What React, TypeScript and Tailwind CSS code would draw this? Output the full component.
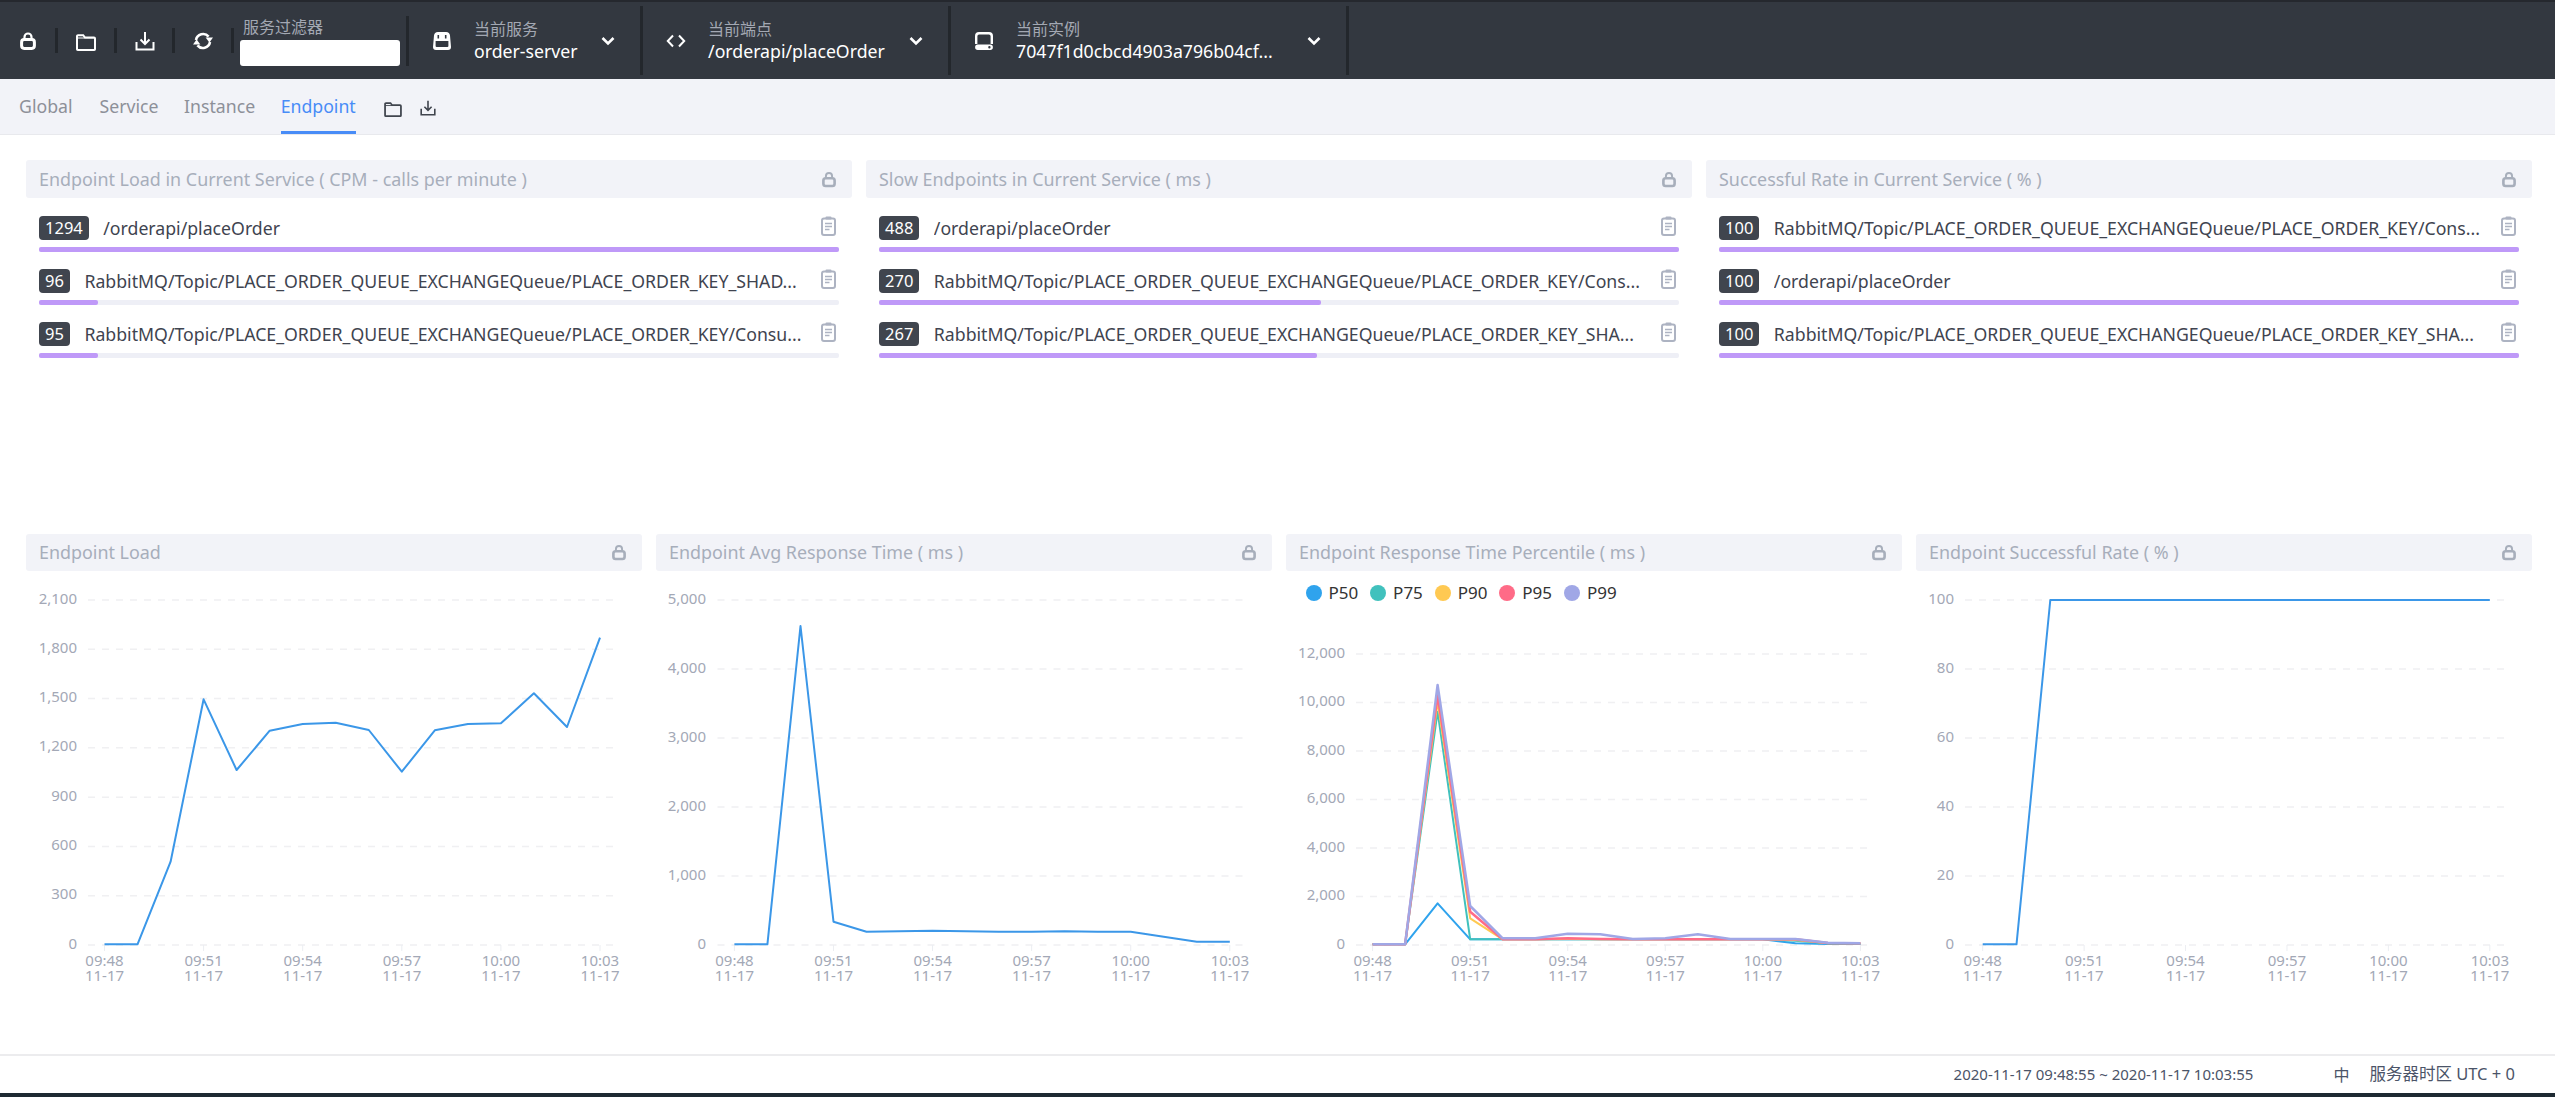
import React from "react";

const tickLabels = ["09:48", "09:51", "09:54", "09:57", "10:00", "10:03"];

const LockIcon = ({ className }: { className?: string }) => (
  <svg viewBox="0 0 16 18" className={className} fill="none" stroke="currentColor">
    <path d="M4.5 8V5a3.5 3.5 0 0 1 7 0v3" strokeWidth="2.2" />
    <rect x="1.6" y="7.6" width="12.8" height="8.8" rx="2.6" strokeWidth="3" />
  </svg>
);

const FolderIcon = ({ className }: { className?: string }) => (
  <svg viewBox="0 0 20 17" className={className} fill="none" stroke="currentColor" strokeWidth="2">
    <path d="M1 15.2V2.2a1 1 0 0 1 1-1h5.2l1.8 2.4h9a1 1 0 0 1 1 1v10.6a.8.8 0 0 1-.8.8H1.8a.8.8 0 0 1-.8-.8z" />
    <path d="M1 4h18" strokeWidth="1" />
  </svg>
);

const DownloadIcon = ({ className }: { className?: string }) => (
  <svg viewBox="0 0 20 20" className={className} fill="none" stroke="currentColor" strokeWidth="2">
    <path d="M10 1v12M5.5 8.5 10 13l4.5-4.5" />
    <path d="M1.5 11v7.5h17V11" />
  </svg>
);

const RefreshIcon = ({ className }: { className?: string }) => (
  <svg viewBox="0 0 20 20" className={className} fill="none" stroke="currentColor" strokeWidth="2.6">
    <path d="M3 9A7.2 7.2 0 0 1 15.6 5.6" />
    <path d="M17 11A7.2 7.2 0 0 1 4.4 14.4" />
    <path d="M12.6 6.6h7.4l-3.6 5z" fill="currentColor" strokeWidth="0" />
    <path d="M0 13.4h7.4l-3.8-5z" fill="currentColor" strokeWidth="0" />
  </svg>
);

const ServiceIcon = ({ className }: { className?: string }) => (
  <svg viewBox="0 0 18 18" className={className} fill="currentColor">
    <path fillRule="evenodd" d="M5 0h8a4 4 0 0 1 4 3.5L18 15a3 3 0 0 1-3 3H3a3 3 0 0 1-3-3L1 3.5A4 4 0 0 1 5 0zM4.5 3v3.5h1.6V3zm7.4 0v3.5h1.6V3zM2.6 9V14a1 1 0 0 0 1 1h10.8a1 1 0 0 0 1-1V9z" />
  </svg>
);

const CodeIcon = ({ className }: { className?: string }) => (
  <svg viewBox="0 0 20 14" className={className} fill="none" stroke="currentColor" strokeWidth="2">
    <path d="M7 1.5 1.8 7 7 12.5M13 1.5 18.2 7 13 12.5" />
  </svg>
);

const InstanceIcon = ({ className }: { className?: string }) => (
  <svg viewBox="0 0 18 18" className={className} fill="currentColor">
    <path fillRule="evenodd" d="M4 0h10a4 4 0 0 1 4 4v8h-2.4V4.2a1.7 1.7 0 0 0-1.7-1.7H4.1a1.7 1.7 0 0 0-1.7 1.7V12H0V4a4 4 0 0 1 4-4zM2.8 12.6h12.4a2.7 2.7 0 0 1 0 5.4H2.8a2.7 2.7 0 0 1 0-5.4zm11.6 1.5a1.2 1.2 0 1 0 0 2.4 1.2 1.2 0 0 0 0-2.4z" />
  </svg>
);

const ChevronIcon = ({ className }: { className?: string }) => (
  <svg viewBox="0 0 14 10" className={className} fill="none" stroke="currentColor" strokeWidth="2.6">
    <path d="M1.5 2 7 7.5 12.5 2" />
  </svg>
);

const ClipboardIcon = () => (
  <svg viewBox="0 0 15 20" className="h-[20px] w-[15px] shrink-0 text-[#adb3c2]" fill="none" stroke="currentColor">
    <rect x="1" y="2.5" width="13" height="16.5" rx="2" strokeWidth="2" />
    <rect x="4.5" y="0.5" width="6" height="3" rx="1" fill="currentColor" strokeWidth="0" />
    <path d="M4 7.5h7M4 10.5h7M4 13.5h4.5" strokeWidth="1.3" />
  </svg>
);

const PanelHeader = ({ title, height }: { title: string; height: string }) => (
  <div className={`flex items-center justify-between rounded-[3px] bg-[#f2f3f8] pl-[13px] pr-[16px] text-[17.9px] text-[#a7aebb] ${height}`}>
    <span>{title}</span>
    <LockIcon className="h-[17px] w-[14px]" />
  </div>
);

type RowData = { value: string; label: string; pct: number };

const ListCard = ({ title, rows }: { title: string; rows: RowData[] }) => (
  <div>
    <PanelHeader title={title} height="h-[38px]" />
    <div className="flex flex-col gap-[17px] px-[13px] pt-[18px]">
      {rows.map((r) => (
        <div key={r.label + r.value}>
          <div className="flex h-[24px] items-start text-[17.7px] text-[#3f4450]">
            <span className="h-[24px] shrink-0 rounded-[4px] bg-[#40454e] px-[6px] text-[16.5px] leading-[24px] text-white">{r.value}</span>
            <span className="ml-[14.5px] flex-1 truncate leading-[24px]">{r.label}</span>
            <span className="ml-[8px] mr-[3px]"><ClipboardIcon /></span>
          </div>
          <div className="mt-[7px] h-[5px] rounded-[2px] bg-[#eeeff6]">
            <div className="h-full rounded-[2px] bg-[#bf99f8]" style={{ width: `${r.pct}%` }} />
          </div>
        </div>
      ))}
    </div>
  </div>
);

type Series = { color: string; width: number; ys: number[] };

type ChartProps = {
  title: string;
  labelRight: number;
  gridLeft: number;
  gridRight: number;
  firstX: number;
  lastX: number;
  topY: number;
  yLabels: string[];
  series: Series[];
  legend?: boolean;
};

// everything below is in chart-local px: x from the card's left edge, y from the header's bottom
const Chart = ({ title, labelRight, gridLeft, gridRight, firstX, lastX, topY, yLabels, series, legend }: ChartProps) => {
  const bottomY = 374;
  const step = (lastX - firstX) / 15;
  const xs = Array.from({ length: 16 }, (_, i) => firstX + i * step);
  return (
    <div className="relative">
      <PanelHeader title={title} height="h-[37px]" />
      {legend && (
        <div className="absolute left-[19.5px] top-[49px] flex gap-[13.6px] text-[17px] leading-[20px] text-[#333]">
          {[
            ["P50", "bg-[#2fa3ed]"],
            ["P75", "bg-[#41c1bd]"],
            ["P90", "bg-[#ffc952]"],
            ["P95", "bg-[#ff6b87]"],
            ["P99", "bg-[#a0a7e6]"],
          ].map(([name, bg]) => (
            <span key={name} className="flex w-[51px] items-center gap-[7px]">
              <span className={`h-[16px] w-[16px] shrink-0 rounded-full ${bg}`} />
              <span>{name}</span>
            </span>
          ))}
        </div>
      )}
      <svg width={616} height={440} className="block">
        {yLabels.map((lbl, i) => {
          const y = topY + ((bottomY - topY) * i) / (yLabels.length - 1);
          return (
            <g key={lbl}>
              <line x1={gridLeft} x2={gridRight} y1={y} y2={y} stroke="#f0f0f2" strokeWidth={1.5} strokeDasharray="7 7" />
              <text x={labelRight} y={y + 3.5} textAnchor="end" fontSize={15} fill="#a3a8b6">{lbl}</text>
            </g>
          );
        })}
        {tickLabels.map((t, i) => {
          const x = xs[i * 3];
          return (
            <g key={t}>
              <line x1={x} x2={x} y1={bottomY} y2={bottomY + 6} stroke="#eceef2" />
              <text x={x} y={bottomY + 21} textAnchor="middle" fontSize={15} fill="#a3a8b6">{t}</text>
              <text x={x} y={bottomY + 36} textAnchor="middle" fontSize={15} fill="#a3a8b6">11-17</text>
            </g>
          );
        })}
        {series.map((s) => (
          <polyline
            key={s.color}
            fill="none"
            stroke={s.color}
            strokeWidth={s.width}
            strokeLinejoin="round"
            points={s.ys.map((y, i) => `${xs[i].toFixed(1)},${y}`).join(" ")}
          />
        ))}
      </svg>
    </div>
  );
};

// reference y pixels (page) -> chart-local y
const toLocal = (ys: number[]) => ys.map((y) => +(y - 571).toFixed(1));
const zoomY = (zs: number[]) => toLocal(zs.map((z) => 520 + z / 3));

const blue = "#3b97e8";

const App = () => {
  return (
    <div className="flex h-[1097px] w-[2555px] flex-col overflow-hidden bg-white font-['Noto_Sans','Noto_Sans_CJK_SC',sans-serif]">
      {/* top bar */}
      <header className="flex h-[79px] shrink-0 items-center border-t-2 border-[#25282e] bg-[#333840] text-white">
        {[LockIcon, FolderIcon, DownloadIcon, RefreshIcon].map((Icon, i) => (
          <div key={i} className={`flex h-[25px] items-center justify-center border-r-[3px] border-[#23272c] ${i === 0 ? "w-[58px]" : "w-[58.7px]"}`}>
            <Icon className={i === 0 ? "h-[18px] w-[16px]" : i === 1 ? "mt-[4px] h-[17px] w-[20px]" : "h-[20px] w-[20px]"} />
          </div>
        ))}
        <div className="flex h-[50px] w-[175px] flex-col border-r-[3px] border-[#23272c] pl-[6px]">
          <span className="pl-[3px] text-[16px] leading-[22px] text-[#a3a8b3]">服务过滤器</span>
          <div className="mt-[2px] h-[26px] w-[160px] rounded-[3px] bg-white" />
        </div>
        <Selector width="w-[234px]" icon={<ServiceIcon className="h-[18px] w-[18px]" />} label="当前服务" value="order-server" />
        <Selector width="w-[308px]" icon={<CodeIcon className="h-[14px] w-[20px]" />} label="当前端点" value="/orderapi/placeOrder" />
        <Selector width="w-[398px]" icon={<InstanceIcon className="h-[18px] w-[18px]" />} label="当前实例" value="7047f1d0cbcd4903a796b04cf..." />
      </header>

      {/* tabs */}
      <nav className="flex h-[56px] shrink-0 items-center border-b border-[#e8e9ed] bg-[#f2f3f8] pl-[19px] text-[17.7px] text-[#8d9099]">
        <span className="mr-[27px]">Global</span>
        <span className="mr-[25.5px]">Service</span>
        <span className="mr-[25.5px]">Instance</span>
        <span className="relative flex h-full items-center text-[#488cf7]">
          Endpoint
          <span className="absolute bottom-0 left-0 right-0 h-[3px] bg-[#488cf7]" />
        </span>
        <FolderIcon className="ml-[28px] mt-[5px] h-[15px] w-[18px] text-[#40454e]" />
        <DownloadIcon className="ml-[18px] mt-[3px] h-[16px] w-[16px] text-[#40454e]" />
      </nav>

      {/* dashboard */}
      <main className="flex-1 px-[26px] pr-[23px] pt-[25px]">
        <div className="grid h-[374px] grid-cols-3 content-start gap-x-[14px]">
          <ListCard
            title="Endpoint Load in Current Service ( CPM - calls per minute )"
            rows={[
              { value: "1294", label: "/orderapi/placeOrder", pct: 100 },
              { value: "96", label: "RabbitMQ/Topic/PLACE_ORDER_QUEUE_EXCHANGEQueue/PLACE_ORDER_KEY_SHAD...", pct: 7.4 },
              { value: "95", label: "RabbitMQ/Topic/PLACE_ORDER_QUEUE_EXCHANGEQueue/PLACE_ORDER_KEY/Consu...", pct: 7.4 },
            ]}
          />
          <ListCard
            title="Slow Endpoints in Current Service ( ms )"
            rows={[
              { value: "488", label: "/orderapi/placeOrder", pct: 100 },
              { value: "270", label: "RabbitMQ/Topic/PLACE_ORDER_QUEUE_EXCHANGEQueue/PLACE_ORDER_KEY/Cons...", pct: 55.3 },
              { value: "267", label: "RabbitMQ/Topic/PLACE_ORDER_QUEUE_EXCHANGEQueue/PLACE_ORDER_KEY_SHA...", pct: 54.7 },
            ]}
          />
          <ListCard
            title="Successful Rate in Current Service ( % )"
            rows={[
              { value: "100", label: "RabbitMQ/Topic/PLACE_ORDER_QUEUE_EXCHANGEQueue/PLACE_ORDER_KEY/Cons...", pct: 100 },
              { value: "100", label: "/orderapi/placeOrder", pct: 100 },
              { value: "100", label: "RabbitMQ/Topic/PLACE_ORDER_QUEUE_EXCHANGEQueue/PLACE_ORDER_KEY_SHA...", pct: 100 },
            ]}
          />
        </div>
        <div className="grid grid-cols-4 gap-x-[14px]">
          <Chart
            title="Endpoint Load"
            labelRight={51}
            gridLeft={62}
            gridRight={591}
            firstX={78.5}
            lastX={574}
            topY={29}
            yLabels={["2,100", "1,800", "1,500", "1,200", "900", "600", "300", "0"]}
            series={[{ color: blue, width: 2, ys: zoomY([1273, 1273, 1025, 538, 750, 632, 612, 608, 630, 755, 631, 612, 610, 520, 621, 353]) }]}
          />
          <Chart
            title="Endpoint Avg Response Time ( ms )"
            labelRight={50}
            gridLeft={61.5}
            gridRight={590.6}
            firstX={78.4}
            lastX={573.8}
            topY={29}
            yLabels={["5,000", "4,000", "3,000", "2,000", "1,000", "0"]}
            series={[{ color: blue, width: 2, ys: zoomY([1273, 1273, 318, 1205, 1235, 1234, 1232, 1234, 1235, 1235, 1234, 1235, 1235, 1250, 1265, 1265]) }]}
          />
          <Chart
            title="Endpoint Response Time Percentile ( ms )"
            labelRight={59}
            gridLeft={70}
            gridRight={588}
            firstX={86.6}
            lastX={574.4}
            topY={83}
            yLabels={["12,000", "10,000", "8,000", "6,000", "4,000", "2,000", "0"]}
            legend
            series={[
              { color: "#2fa3ed", width: 2, ys: zoomY([1273, 1273, 1150, 1258, 1258, 1258, 1258, 1258, 1258, 1258, 1258, 1258, 1258, 1270, 1272, 1272]) },
              { color: "#41c1bd", width: 2, ys: zoomY([1273, 1273, 575, 1258, 1258, 1258, 1258, 1258, 1258, 1258, 1258, 1258, 1258, 1262, 1270, 1271]) },
              { color: "#ffc952", width: 2, ys: zoomY([1273, 1273, 545, 1195, 1258, 1258, 1257, 1258, 1258, 1258, 1258, 1258, 1258, 1260, 1270, 1270]) },
              { color: "#ff6b87", width: 2.5, ys: zoomY([1273, 1273, 525, 1175, 1258, 1258, 1255, 1257, 1258, 1258, 1258, 1258, 1258, 1258, 1269, 1270]) },
              { color: "#a0a7e6", width: 2.5, ys: zoomY([1273, 1273, 495, 1158, 1255, 1255, 1241, 1243, 1257, 1255, 1243, 1257, 1257, 1257, 1268, 1270]) },
            ]}
          />
          <Chart
            title="Endpoint Successful Rate ( % )"
            labelRight={38}
            gridLeft={49}
            gridRight={589}
            firstX={66.7}
            lastX={573.8}
            topY={29}
            yLabels={["100", "80", "60", "40", "20", "0"]}
            series={[{ color: blue, width: 2, ys: zoomY([1273, 1273, 240, 240, 240, 240, 240, 240, 240, 240, 240, 240, 240, 240, 240, 240]) }]}
          />
        </div>
      </main>

      {/* footer */}
      <footer className="flex h-[39px] shrink-0 items-center justify-end border-t-2 border-[#ececee] pr-[40px] text-[15px] text-[#4b5468]">
        <span>2020-11-17 09:48:55 ~ 2020-11-17 10:03:55</span>
        <span className="ml-[80px] text-[16px]">中</span>
        <span className="ml-[20px] text-[16.5px]">服务器时区 UTC + 0</span>
      </footer>
      <div className="h-[4px] shrink-0 bg-[#1e2a32]" />
    </div>
  );
};

const Selector = ({ width, icon, label, value }: { width: string; icon: React.ReactNode; label: string; value: string }) => (
  <div className={`flex h-[69px] shrink-0 items-center border-r-[3px] border-[#23272c] ${width}`}>
    <div className="flex w-[65px] justify-center">{icon}</div>
    <div className="mb-[2px] flex-1">
      <div className="text-[16px] leading-[22px] text-[#a3a8b3]">{label}</div>
      <div className="text-[17.7px] leading-[22px] text-white">{value}</div>
    </div>
    <ChevronIcon className="mr-[25px] h-[10px] w-[14px]" />
  </div>
);

export default App;
